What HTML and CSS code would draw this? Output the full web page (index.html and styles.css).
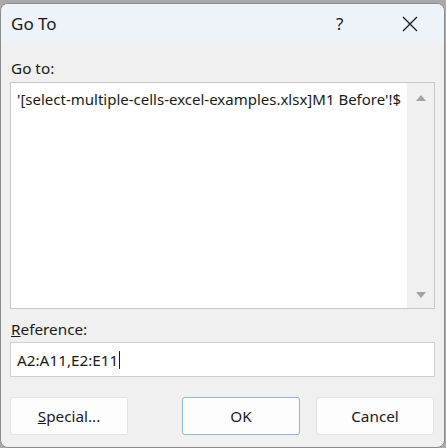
FILE: index.html
```html
<!DOCTYPE html>
<html>
<head>
<meta charset="utf-8">
<link rel="stylesheet" href="styles.css">
</head>
<body>
<div class="window">
  <div class="titlebar">
    <span class="title">Go To</span>
    <span class="help">?</span>
    <span class="close">
      <svg width="16" height="16" viewBox="0 0 16 16"><path d="M1 1 L15 15 M15 1 L1 15" stroke="#1a1a1a" stroke-width="1.3" fill="none"/></svg>
    </span>
  </div>
  <div class="content">
    <div class="label">Go to:</div>
    <div class="listbox">
      <div class="list-items">
        <div class="item">'[select-multiple-cells-excel-examples.xlsx]M1 Before'!$</div>
      </div>
      <div class="scrollbar">
        <span class="arrow up"></span>
        <span class="arrow down"></span>
      </div>
    </div>
    <div class="label ref-label"><u>R</u>eference:</div>
    <div class="input"><span class="input-text">A2:A11,E2:E11</span><span class="caret"></span></div>
    <div class="buttons">
      <div class="btn"><u>S</u>pecial...</div>
      <div class="spacer"></div>
      <div class="btn primary">OK</div>
      <div class="btn">Cancel</div>
    </div>
  </div>
</div>
</body>
</html>
```

FILE: styles.css
```css
html, body {
  margin: 0;
  padding: 0;
}
body {
  width: 446px;
  height: 448px;
  background: #a9a9a9;
  font-family: "Noto Sans", "Open Sans", sans-serif;
  color: #1a1a1a;
  overflow: hidden;
}
.window {
  box-sizing: border-box;
  margin: 3px 0 0 0;
  width: 445px;
  height: 445px;
  border: 1px solid #8c8c8c;
  border-radius: 8px;
  background: #f0f0f0;
  overflow: hidden;
  display: flex;
  flex-direction: column;
}
.titlebar {
  height: 39px;
  flex: none;
  background: #eef2f9;
  display: flex;
  align-items: center;
  padding-left: 10px;
}
.title {
  font-size: 17px;
  flex: 1;
}
.help {
  font-size: 17px;
  width: 20px;
  margin-right: 46px;
  color: #1a1a1a;
}
.close {
  width: 16px;
  height: 16px;
  margin-right: 26px;
  display: flex;
}
.content {
  flex: 1;
  padding: 0 9px 0 9px;
  display: flex;
  flex-direction: column;
}
.label {
  font-size: 15.3px;
  line-height: 20px;
  margin-top: 15px;
  padding-left: 1px;
}
.listbox {
  margin-top: 4px;
  height: 227px;
  border: 1px solid #c7c7c7;
  background: #fff;
  display: flex;
  box-sizing: border-box;
}
.list-items {
  flex: 1;
  overflow: hidden;
  padding: 6px 0 0 6px;
}
.item {
  font-size: 15px;
  line-height: 20px;
  white-space: nowrap;
}
.scrollbar {
  width: 27px;
  flex: none;
  background: #f0f0f0;
  display: flex;
  flex-direction: column;
  justify-content: space-between;
  align-items: center;
  padding: 12px 0 10px 0;
}
.arrow {
  width: 0;
  height: 0;
  border-left: 5px solid transparent;
  border-right: 5px solid transparent;
}
.arrow.up {
  border-bottom: 6px solid #a3a3a3;
}
.arrow.down {
  border-top: 6px solid #a3a3a3;
}
.ref-label {
  margin-top: 10px;
}
.input {
  margin-top: 3px;
  height: 35px;
  box-sizing: border-box;
  border: 1px solid #cfcfcf;
  background: #fff;
  display: flex;
  align-items: center;
  padding-left: 6px;
  font-size: 15.3px;
}
.caret {
  width: 1px;
  height: 18px;
  background: #1a1a1a;
  margin-left: 1px;
}
.buttons {
  margin-top: 20px;
  display: flex;
  gap: 16px;
}
.spacer {
  width: 22px;
}
.btn {
  width: 118px;
  height: 38px;
  box-sizing: border-box;
  background: #fdfdfd;
  border: 1px solid #e3e3e3;
  border-radius: 3px;
  display: flex;
  align-items: center;
  justify-content: center;
  font-size: 15.3px;
}
.btn.primary {
  border-color: #8db6dd;
}
```
